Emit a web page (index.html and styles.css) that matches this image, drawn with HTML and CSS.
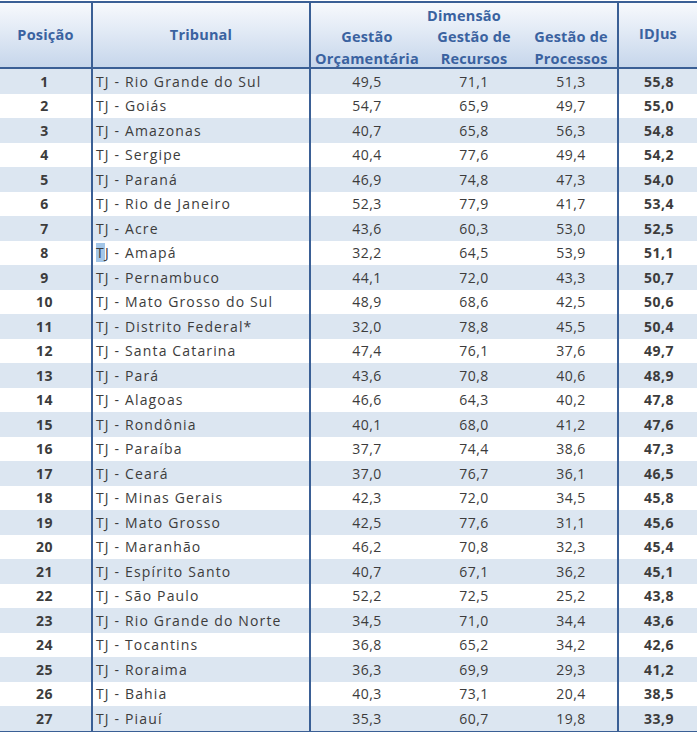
FILE: index.html
```html
<!DOCTYPE html>
<html lang="pt">
<head>
<meta charset="utf-8">
<title>IDJus</title>
<link rel="stylesheet" href="styles.css">
</head>
<body>
<div class="table">
  <div class="thead">
    <div class="th pos">Posição</div>
    <div class="th trib">Tribunal</div>
    <div class="th dim">Dimensão</div>
    <div class="th sub c3">Gestão<br>Orçamentária</div>
    <div class="th sub c4">Gestão de<br>Recursos</div>
    <div class="th sub c5">Gestão de<br>Processos</div>
    <div class="th idj">IDJus</div>
  </div>
  <div class="tbody" id="tbody"></div>
</div>
<script>
const rows = [
[1,"Rio Grande do Sul","49,5","71,1","51,3","55,8"],
[2,"Goiás","54,7","65,9","49,7","55,0"],
[3,"Amazonas","40,7","65,8","56,3","54,8"],
[4,"Sergipe","40,4","77,6","49,4","54,2"],
[5,"Paraná","46,9","74,8","47,3","54,0"],
[6,"Rio de Janeiro","52,3","77,9","41,7","53,4"],
[7,"Acre","43,6","60,3","53,0","52,5"],
[8,"Amapá","32,2","64,5","53,9","51,1"],
[9,"Pernambuco","44,1","72,0","43,3","50,7"],
[10,"Mato Grosso do Sul","48,9","68,6","42,5","50,6"],
[11,"Distrito Federal*","32,0","78,8","45,5","50,4"],
[12,"Santa Catarina","47,4","76,1","37,6","49,7"],
[13,"Pará","43,6","70,8","40,6","48,9"],
[14,"Alagoas","46,6","64,3","40,2","47,8"],
[15,"Rondônia","40,1","68,0","41,2","47,6"],
[16,"Paraíba","37,7","74,4","38,6","47,3"],
[17,"Ceará","37,0","76,7","36,1","46,5"],
[18,"Minas Gerais","42,3","72,0","34,5","45,8"],
[19,"Mato Grosso","42,5","77,6","31,1","45,6"],
[20,"Maranhão","46,2","70,8","32,3","45,4"],
[21,"Espírito Santo","40,7","67,1","36,2","45,1"],
[22,"São Paulo","52,2","72,5","25,2","43,8"],
[23,"Rio Grande do Norte","34,5","71,0","34,4","43,6"],
[24,"Tocantins","36,8","65,2","34,2","42,6"],
[25,"Roraima","36,3","69,9","29,3","41,2"],
[26,"Bahia","40,3","73,1","20,4","38,5"],
[27,"Piauí","35,3","60,7","19,8","33,9"]
];
const tb = document.getElementById('tbody');
rows.forEach(r => {
  const row = document.createElement('div');
  row.className = 'tr' + (r[0] % 2 ? ' odd' : '');
  const tj = r[0] === 8 ? '<span class="hl">T</span>J' : 'TJ';
  row.innerHTML =
    '<div class="td pos">' + r[0] + '</div>' +
    '<div class="td trib">' + tj + ' - ' + r[1] + '</div>' +
    '<div class="td num">' + r[2] + '</div>' +
    '<div class="td num">' + r[3] + '</div>' +
    '<div class="td num sep">' + r[4] + '</div>' +
    '<div class="td idj">' + r[5] + '</div>';
  tb.appendChild(row);
});
</script>
</body>
</html>
```

FILE: styles.css
```css
html, body {
  margin: 0;
  padding: 0;
  background: #ffffff;
}

body {
  padding-top: 1px;
  font-family: "Open Sans", "Noto Sans", "Liberation Sans", sans-serif;
}

.table {
  width: 697px;
  border-top: 2px solid #3a5f95;
  border-bottom: 2px solid #3a5f95;
}

.thead {
  display: grid;
  grid-template-columns: 93px 218px 112px 102px 94px 78px;
  grid-template-rows: 23px 41px;
  background: linear-gradient(to bottom, #f7f9fc 0%, #e6edf7 35%, #c6d6eb 100%);
  border-bottom: 2px solid #3a5f95;
  color: #3a62a0;
  font-weight: 700;
  font-size: 14.5px;
  letter-spacing: 0.2px;
}

.th {
  display: flex;
  align-items: center;
  justify-content: center;
  text-align: center;
  line-height: 22px;
}

.th.pos {
  grid-column: 1;
  grid-row: 1 / 3;
  border-right: 2px solid #3a5f95;
}

.th.trib {
  grid-column: 2;
  grid-row: 1 / 3;
  border-right: 2px solid #3a5f95;
}

.th.dim {
  grid-column: 3 / 6;
  grid-row: 1;
  border-right: 2px solid #3a5f95;
  padding-top: 3px;
}

.th.sub {
  grid-row: 2;
  align-items: flex-start;
  height: 41px;
  overflow: visible;
}

.th.c3 { grid-column: 3; }
.th.c4 { grid-column: 4; }
.th.c5 { grid-column: 5; border-right: 2px solid #3a5f95; }

.th.idj {
  grid-column: 6;
  grid-row: 1 / 3;
  padding-bottom: 2px;
}

.tbody {
  display: flex;
  flex-direction: column;
}

.tr {
  display: grid;
  grid-template-columns: 93px 218px 112px 102px 94px 78px;
  height: 24.5px;
  background: #ffffff;
  color: #3c3c3c;
  font-size: 14px;
  letter-spacing: 0.5px;
}

.tr.odd {
  background: #dce6f1;
}

.td {
  display: flex;
  align-items: center;
  justify-content: center;
  white-space: nowrap;
}

.td.pos {
  font-weight: 700;
  border-right: 2px solid #3a5f95;
  padding-right: 2px;
}

.td.trib {
  justify-content: flex-start;
  padding-left: 3px;
  border-right: 2px solid #3a5f95;
  letter-spacing: 1.15px;
}

.td.sep {
  border-right: 2px solid #3a5f95;
}

.td.idj {
  font-weight: 700;
  padding-left: 2px;
}

.hl {
  background: #a3c6e8;
}
```
